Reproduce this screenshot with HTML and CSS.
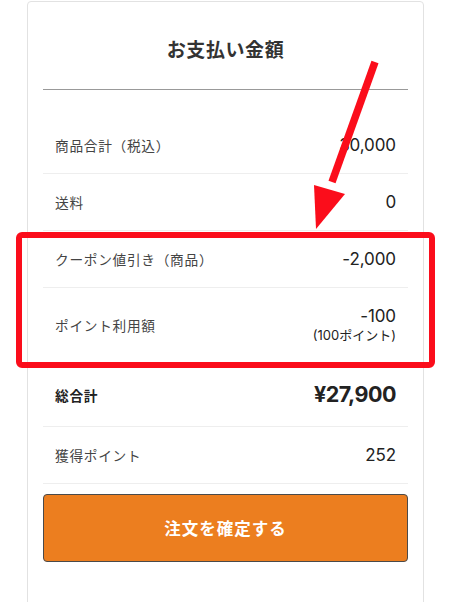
FILE: index.html
```html
<!DOCTYPE html>
<html lang="ja">
<head>
<meta charset="utf-8">
<link rel="stylesheet" href="styles.css">
</head>
<body>
<div class="page">
  <section class="card">
    <h2 class="title">お支払い金額</h2>
    <div class="rows">
      <div class="row"><span class="label">商品合計（税込）</span><span class="value">30,000</span></div>
      <div class="row"><span class="label">送料</span><span class="value">0</span></div>
      <div class="group">
        <div class="row"><span class="label">クーポン値引き（商品）</span><span class="value">-2,000</span></div>
        <div class="row"><span class="label">ポイント利用額</span><span class="value stack"><span>-100</span><span class="sub">(100ポイント)</span></span></div>
        <div class="highlight"></div>
      </div>
      <div class="row total"><span class="label">総合計</span><span class="value">¥27,900</span></div>
      <div class="row"><span class="label">獲得ポイント</span><span class="value">252</span></div>
    </div>
    <button class="confirm">注文を確定する</button>
  </section>
  <svg class="arrow" width="474" height="602" viewBox="0 0 474 602">
    <line x1="375" y1="62" x2="332" y2="182" stroke="#fb0d1b" stroke-width="7.5"/>
    <polygon points="314,185 345,194 316,229" fill="#fb0d1b"/>
  </svg>
</div>
</body>
</html>
```
FILE: styles.css
```css
* { box-sizing: border-box; }
html, body { margin: 0; padding: 0; background: #fff; }
body {
  font-family: "Noto Sans CJK JP", "Noto Sans", sans-serif;
  color: #333;
  overflow: hidden;
}
.page {
  position: relative;
  width: 474px;
  height: 602px;
  padding-top: 1px;
}
.card {
  margin-left: 27px;
  width: 397px;
  border: 1px solid #e2e2e2;
  border-radius: 4px;
  padding: 0 15px 60px;
  background: #fff;
}
.title {
  margin: 0;
  padding: 35px 0 28px;
  text-align: center;
  font-size: 19px;
  line-height: 24px;
  font-weight: 700;
  color: #333;
  border-bottom: 1px solid #999;
  letter-spacing: 0.6px;
}
.rows { margin-top: 27px; }
.row {
  display: flex;
  justify-content: space-between;
  align-items: center;
  padding: 18px 12px;
  border-bottom: 1px solid #eee;
}
.label {
  font-size: 13.7px;
  line-height: 20px;
  color: #444;
  letter-spacing: 0.7px;
}
.value {
  font-family: "Inter", "Noto Sans", sans-serif;
  font-size: 17px;
  line-height: 20px;
  color: #222;
  letter-spacing: -0.1px;
}
.stack {
  display: flex;
  flex-direction: column;
  align-items: flex-end;
}
.sub {
  font-family: "Inter", "Noto Sans CJK JP", sans-serif;
  font-size: 13px;
  line-height: 18px;
  color: #222;
  letter-spacing: 0;
}
.total .label { font-weight: 700; color: #222; }
.total .value {
  font-size: 21.5px;
  line-height: 27px;
  font-weight: 700;
  letter-spacing: -0.5px;
}
.group { position: relative; }
.highlight {
  position: absolute;
  left: -27px;
  right: -27px;
  top: 1px;
  bottom: -5px;
  border: 6.5px solid #fb0d1b;
  border-radius: 6px;
  pointer-events: none;
}
.confirm {
  display: block;
  width: 100%;
  margin-top: 10px;
  height: 68px;
  background: #ec7e1f;
  border: 1px solid #4a4a4a;
  border-radius: 4px;
  color: #fff;
  font-family: "Noto Sans CJK JP", sans-serif;
  font-size: 16.5px;
  font-weight: 700;
  letter-spacing: 1px;
}
.arrow {
  position: absolute;
  left: 0;
  top: 0;
  pointer-events: none;
}
```
